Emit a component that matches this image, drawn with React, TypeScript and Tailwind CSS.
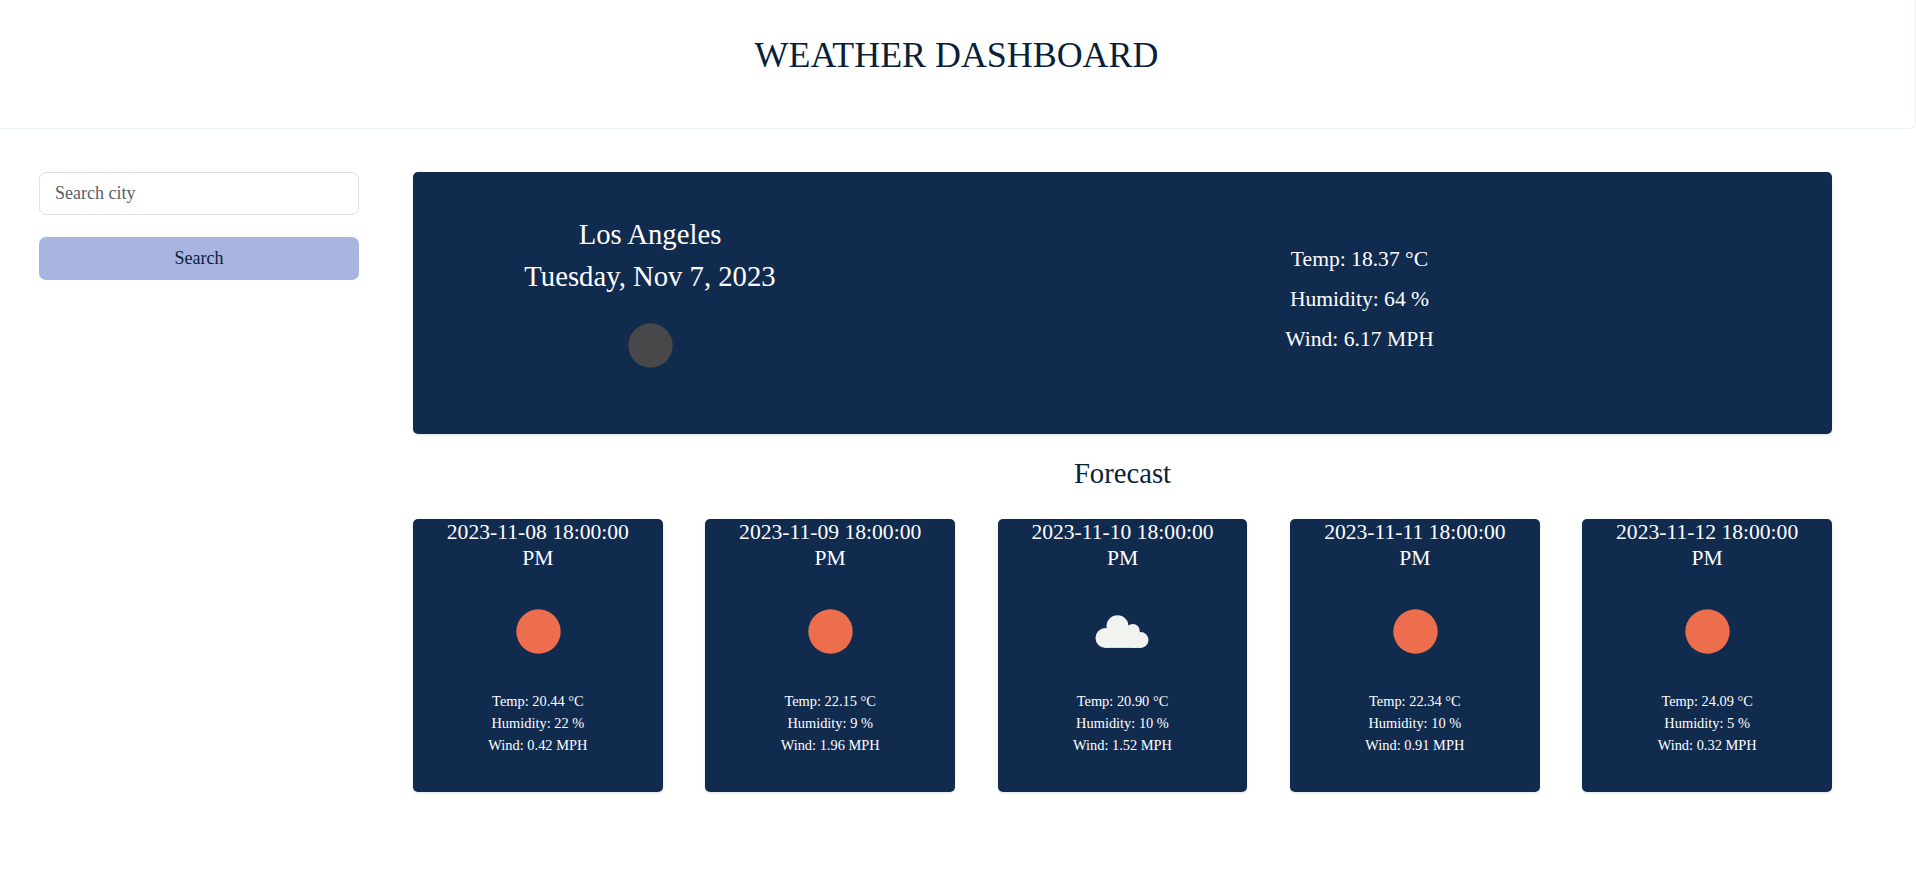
type Sky = "sun" | "cloud" | "night";

interface Day {
  date: string;
  sky: Sky;
  temp: string;
  humidity: string;
  wind: string;
}

const days: Day[] = [
  { date: "2023-11-08 18:00:00 PM", sky: "sun", temp: "20.44", humidity: "22", wind: "0.42" },
  { date: "2023-11-09 18:00:00 PM", sky: "sun", temp: "22.15", humidity: "9", wind: "1.96" },
  { date: "2023-11-10 18:00:00 PM", sky: "cloud", temp: "20.90", humidity: "10", wind: "1.52" },
  { date: "2023-11-11 18:00:00 PM", sky: "sun", temp: "22.34", humidity: "10", wind: "0.91" },
  { date: "2023-11-12 18:00:00 PM", sky: "sun", temp: "24.09", humidity: "5", wind: "0.32" },
];

function SkyIcon({ sky }: { sky: Sky }) {
  return (
    <svg viewBox="0 0 100 100" className="size-[100px]" aria-hidden="true">
      {sky === "cloud" ? (
        <g fill="#f2f2f0">
          <circle cx="33.4" cy="57" r="9.9" />
          <circle cx="45.5" cy="45.2" r="11" />
          <circle cx="60.8" cy="49.9" r="7" />
          <circle cx="68.6" cy="59" r="7.9" />
          <rect x="33.4" y="48" width="30" height="18.9" />
          <rect x="60" y="52" width="8.6" height="14.9" />
        </g>
      ) : (
        <circle cx="50.5" cy="50.5" r="22.2" fill={sky === "sun" ? "#ec6e4c" : "#48484a"} />
      )}
    </svg>
  );
}

function ForecastCard({ day }: { day: Day }) {
  return (
    <article className="flex h-[273px] flex-col items-center rounded-[5px] bg-[#112b4f] text-center text-white shadow-sm">
      <h3 className="w-[200px] text-[21.6px] leading-[26.4px]">{day.date}</h3>
      <div className="mt-[9px]">
        <SkyIcon sky={day.sky} />
      </div>
      <div className="mt-[9px] text-[14.4px] leading-[22px]">
        <p>Temp: {day.temp} °C</p>
        <p>Humidity: {day.humidity} %</p>
        <p>Wind: {day.wind} MPH</p>
      </div>
    </article>
  );
}

export default function App() {
  return (
    <div className="min-h-screen bg-white font-['Liberation_Serif',serif] text-[#0a1f3a]">
      <header className="h-[129px] rounded-br-md border-r border-b border-[#edf2f4] pt-[34px] pr-[2px] text-center">
        <h1 className="text-[35.9px] leading-[43px]">WEATHER DASHBOARD</h1>
      </header>
      <div className="flex pt-[43px] pl-[39px]">
        <form className="flex w-80 flex-col gap-[22px]" onSubmit={(e) => e.preventDefault()}>
          <input
            className="h-[43px] w-full rounded-[7px] border border-[#dee2e6] bg-white px-[15px] text-[18px] placeholder:text-[#5b6067]"
            placeholder="Search city"
          />
          <button className="h-[43px] w-full rounded-[7px] bg-[#a8b5e0] text-[18px]">Search</button>
        </form>
        <main className="ml-[54px] w-[1419px]">
          <section className="flex h-[262px] rounded-[5px] bg-[#112b4f] text-center text-white shadow-sm">
            <div className="flex w-[474px] flex-col items-center pt-[41px] text-[28.7px] leading-[42px]">
              <h2>Los Angeles</h2>
              <p>Tuesday, Nov 7, 2023</p>
              <div className="-mt-0.5">
                <SkyIcon sky="night" />
              </div>
            </div>
            <div className="flex-1 pt-[67px] text-[21.6px] leading-10">
              <p>Temp: 18.37 °C</p>
              <p>Humidity: 64 %</p>
              <p>Wind: 6.17 MPH</p>
            </div>
          </section>
          <h2 className="mt-[22px] text-center text-[28.7px] leading-[34px]">Forecast</h2>
          <div className="mt-[29px] grid grid-cols-5 gap-[42.6px]">
            {days.map((day) => (
              <ForecastCard key={day.date} day={day} />
            ))}
          </div>
        </main>
      </div>
    </div>
  );
}
